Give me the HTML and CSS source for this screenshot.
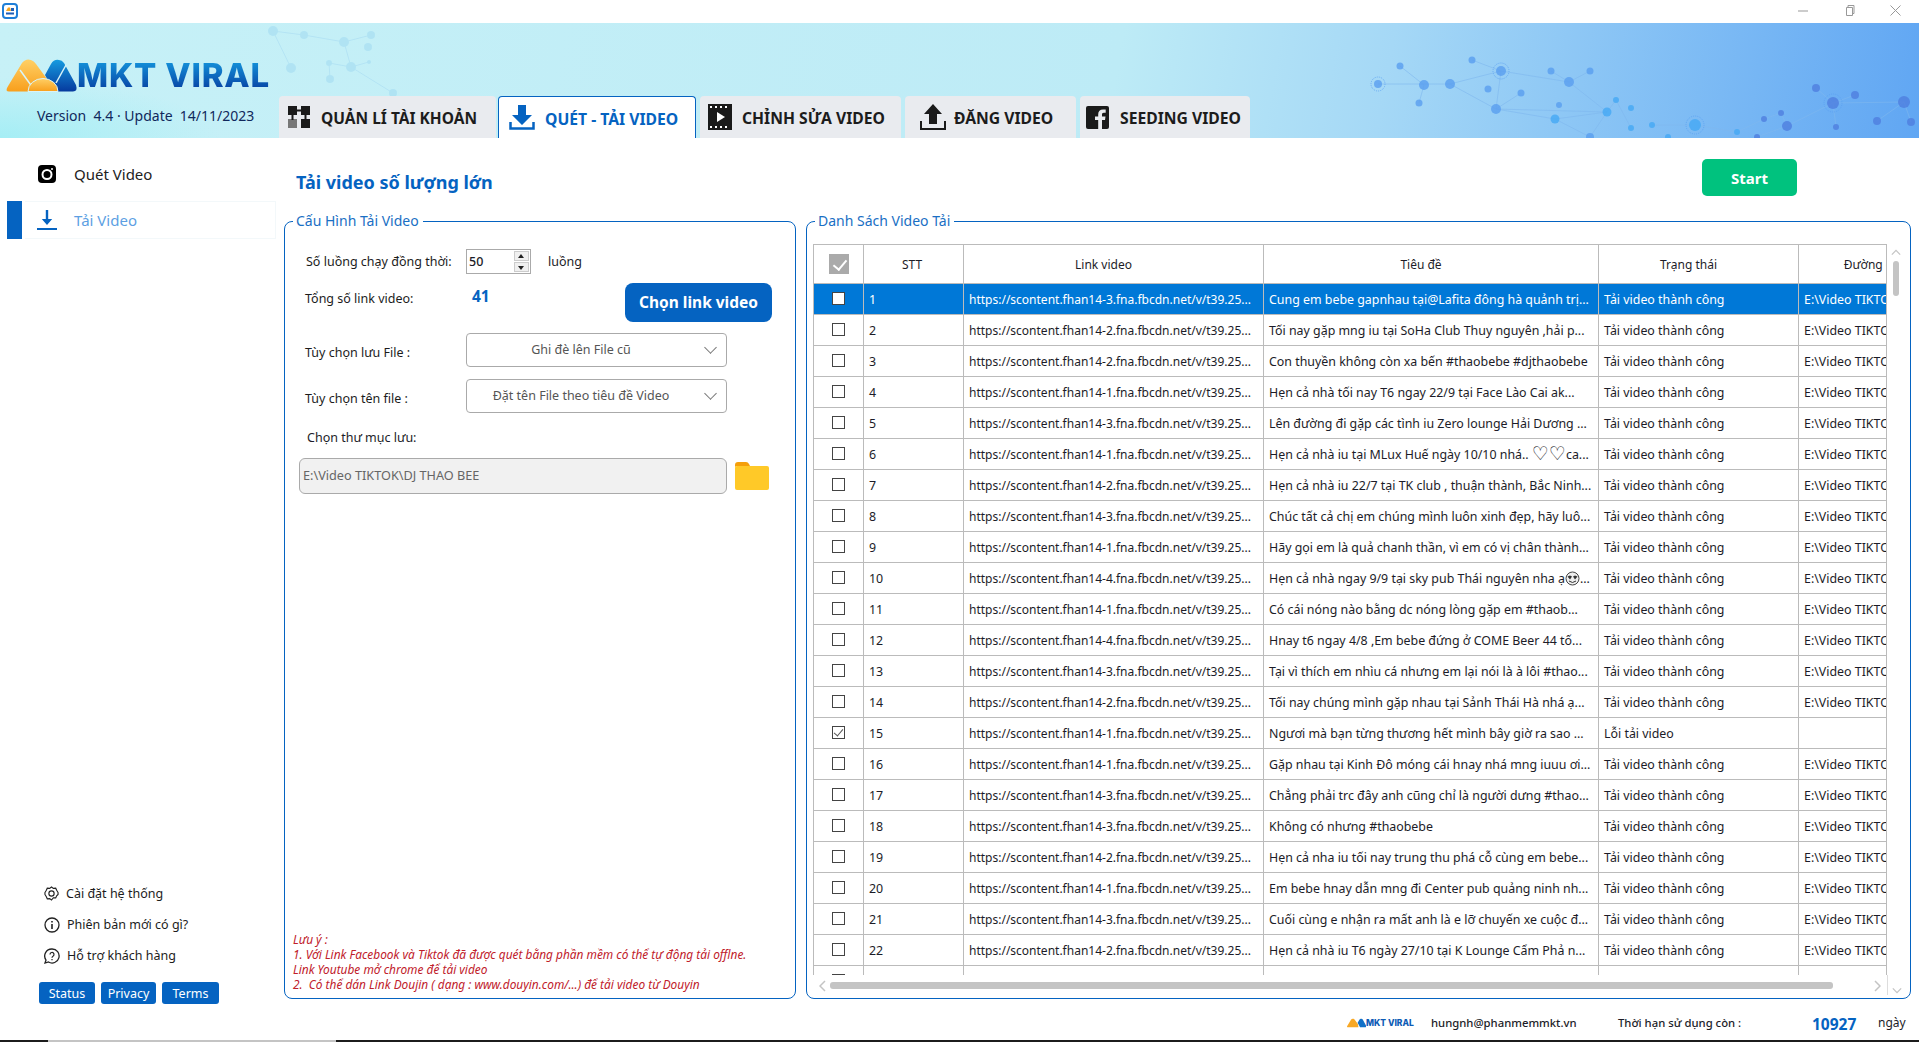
FILE: index.html
```html
<!DOCTYPE html>
<html lang="vi">
<head>
    <meta charset="UTF-8">
    <title>MKT Viral</title>
    <link rel="stylesheet" href="styles.css">
</head>
<body>
<div class="app">
    <div class="titlebar">
        <svg class="app-icon" width="16" height="16" viewBox="0 0 16 16">
            <rect x="1" y="1" width="14" height="14" rx="3" fill="#fff" stroke="#1f7fd8" stroke-width="2"/>
            <path d="M4 8l2-3.500h2l1 3.500z" fill="#f5a623"/>
            <rect x="9" y="5" width="3" height="3" fill="#1f5fb8"/>
            <rect x="4" y="9.500" width="8" height="2" fill="#1f5fb8"/>
        </svg>
        <div class="win-btns">
            <svg width="11" height="11" viewBox="0 0 11 11"><path d="M0 6h10" stroke="#999"/></svg>
            <svg width="11" height="11" viewBox="0 0 11 11"><path d="M2.500 2.500h6v8h-6zM4 2.500V.5h6v8H8.500" fill="none" stroke="#999"/></svg>
            <svg width="11" height="11" viewBox="0 0 11 11"><path d="M.5.5l10 10M10.500.5l-10 10" stroke="#999"/></svg>
        </div>
    </div>

    <header class="banner">
        <svg class="network" viewBox="0 23 1919 115" width="1919" height="115">
            <g class="net-left">
                <g stroke="#a9dcf2" stroke-width="1" fill="none">
                    <path d="M273 31L304 35L344 42M344 42L351 67M371 35L344 42M273 31L291 68M329 63L351 67L369 62M329 63L330 79M351 67L393 93"/>
                </g>
                <g fill="#a4dcf2">
                    <circle cx="273" cy="31" r="5"/><circle cx="304" cy="35" r="4"/><circle cx="344" cy="42" r="5"/>
                    <circle cx="371" cy="35" r="4"/><circle cx="368" cy="47" r="4"/><circle cx="291" cy="68" r="5"/>
                    <circle cx="329" cy="63" r="3"/><circle cx="351" cy="67" r="5"/><circle cx="369" cy="62" r="2"/>
                    <circle cx="330" cy="79" r="4"/><circle cx="393" cy="93" r="4"/>
                </g>
            </g>
            <g stroke="#7fb8ef" stroke-width="1" fill="none" class="net-lines">
                <path d="M1378 84H1424L1450 84L1501 71L1569 82L1607 112L1555 119L1496 109L1450 84M1400 66L1424 85L1419 103M1472 60L1501 71L1496 109L1521 93M1551 71L1569 82L1590 71M1496 109L1607 112M1607 112L1616 100L1631 128M1555 119L1590 137M1607 112L1590 137M1652 125H1695L1737 132L1764 119L1781 113L1787 126L1833 103L1904 102L1911 122M1833 103L1816 88M1833 103L1855 95M1787 126L1757 137M1833 103L1836 127M1904 102L1877 121"/>
            </g>
            <g class="net-dots">
                <g fill="#5a9ff0">
                    <circle cx="1378" cy="84" r="4"/><circle cx="1400" cy="66" r="3.500"/><circle cx="1424" cy="85" r="5"/>
                    <circle cx="1450" cy="84" r="5"/><circle cx="1419" cy="103" r="3.500"/><circle cx="1472" cy="60" r="3.500"/>
                    <circle cx="1501" cy="71" r="5"/><circle cx="1488" cy="89" r="3.500"/><circle cx="1521" cy="93" r="3.500"/>
                    <circle cx="1496" cy="109" r="5"/><circle cx="1551" cy="71" r="3.500"/><circle cx="1569" cy="82" r="5"/>
                    <circle cx="1590" cy="71" r="3.500"/><circle cx="1559" cy="105" r="3"/><circle cx="1590" cy="137" r="4"/>
                </g>
                <g fill="#45a9f5">
                    <circle cx="1555" cy="119" r="4.500"/><circle cx="1607" cy="112" r="4.500"/><circle cx="1616" cy="100" r="3"/>
                    <circle cx="1631" cy="108" r="3"/><circle cx="1631" cy="128" r="3"/><circle cx="1652" cy="125" r="3"/>
                    <circle cx="1695" cy="125" r="6"/><circle cx="1737" cy="132" r="3"/><circle cx="1668" cy="137" r="3"/>
                </g>
                <g fill="#4f7fe0">
                    <circle cx="1764" cy="119" r="3"/><circle cx="1781" cy="113" r="3"/><circle cx="1787" cy="126" r="5"/>
                    <circle cx="1816" cy="88" r="4"/><circle cx="1833" cy="103" r="6"/><circle cx="1855" cy="95" r="4"/>
                    <circle cx="1904" cy="102" r="6"/><circle cx="1877" cy="121" r="4"/><circle cx="1911" cy="122" r="4"/>
                    <circle cx="1836" cy="127" r="3"/><circle cx="1757" cy="137" r="3"/>
                </g>
                <g fill="none" stroke="#5a9ff0" stroke-dasharray="1 1">
                    <circle cx="1378" cy="84" r="7"/><circle cx="1501" cy="71" r="8"/><circle cx="1695" cy="125" r="9"/><circle cx="1833" cy="103" r="9"/>
                </g>
            </g>
        </svg>
        <div class="brand">
            <div class="logo">
                <svg width="76" height="35" viewBox="0 0 74 35">
                    <defs>
                        <linearGradient id="lg-orange" x1="0" y1="0" x2="0" y2="1">
                            <stop offset="0" stop-color="#ffd066"/><stop offset="1" stop-color="#f89f1c"/>
                        </linearGradient>
                        <linearGradient id="lg-blue" x1="0" y1="0" x2="0" y2="1">
                            <stop offset="0" stop-color="#159be0"/><stop offset="1" stop-color="#063a9e"/>
                        </linearGradient>
                    </defs>
                    <path d="M6 33.500Q2 33.500 4.500 29L19 5Q23 0 28 2Q31 3 33 6L44 21L46 33.500z" fill="url(#lg-orange)"/>
                    <path d="M43 17L49 6Q52 1 57 2Q60 2 62 5L74 27Q76 33.500 71 33.500H52z" fill="url(#lg-blue)" transform="translate(-1 0)"/>
                    <path d="M17 12L30 30" stroke="#d9f4f8" stroke-width="1.500"/>
                    <path d="M63 7L53 25" stroke="#d9f4f8" stroke-width="1.500"/>
                    <path d="M25 33.500A15 13 0 0 1 55 33.500z" fill="url(#lg-orange)" stroke="#d9f4f8"/>
                </svg>
                <span class="logo-text">MKT VIRAL</span>
            </div>
            <div class="version">Version&nbsp; 4.4 · Update&nbsp; 14/11/2023</div>
        </div>
        <nav class="tabs">
            <div class="tab tab-accounts">
                <svg width="24" height="24" viewBox="0 0 24 24">
                    <rect x="1" y="1" width="9" height="9" fill="#1a1a1a"/>
                    <rect x="14" y="1" width="9" height="9" fill="#1a1a1a"/>
                    <rect x="1" y="14" width="9" height="9" fill="#777"/>
                    <rect x="14" y="14" width="9" height="9" fill="#1a1a1a"/>
                    <path d="M9 5.500h6M18.500 9v6M5.500 9v6" stroke="#1a1a1a" stroke-width="2"/>
                </svg>
                <span class="tab-label">QUẢN LÍ TÀI KHOẢN</span>
            </div>
            <div class="tab tab-active tab-scan">
                <svg width="26" height="25" viewBox="0 0 26 25">
                    <path d="M9 0h8v10h6L13 20 3 10h6z" fill="#0563c1"/>
                    <path d="M1.500 17v6.500h23V17" fill="none" stroke="#0563c1" stroke-width="2.500"/>
                </svg>
                <span class="tab-label">QUÉT - TẢI VIDEO</span>
            </div>
            <div class="tab tab-edit">
                <svg width="24" height="26" viewBox="0 0 24 26">
                    <rect width="24" height="26" fill="#1a1a1a"/>
                    <path d="M2 2h2v2H2zM7 2h2v2H7zM12 2h2v2h-2zM17 2h2v2h-2zM2 22h2v2H2zM7 22h2v2H7zM12 22h2v2h-2zM17 22h2v2h-2z" fill="#fff"/>
                    <path d="M9 8l8 5-8 5z" fill="#fff"/>
                </svg>
                <span class="tab-label">CHỈNH SỬA VIDEO</span>
            </div>
            <div class="tab tab-post">
                <svg width="26" height="26" viewBox="0 0 26 26">
                    <path d="M13 0l9 10h-5v10H9V10H4z" fill="#1a1a1a"/>
                    <path d="M1 17v8h24v-8" fill="none" stroke="#1a1a1a" stroke-width="2"/>
                </svg>
                <span class="tab-label">ĐĂNG VIDEO</span>
            </div>
            <div class="tab tab-seed">
                <svg width="23" height="23" viewBox="0 0 23 23">
                    <rect width="23" height="23" rx="2" fill="#1a1a1a"/>
                    <path d="M16 23v-9h3l.500-3.500H16V8.500c0-1 .500-1.700 1.800-1.700h1.900V3.600C19 3.500 18 3.400 17 3.400c-3 0-4.800 1.800-4.800 4.800v2.300H9V14h3.200v9z" fill="#e9ebef"/>
                </svg>
                <span class="tab-label">SEEDING VIDEO</span>
            </div>
        </nav>
    </header>

    <div class="main">
        <aside class="sidebar">
            <nav class="side-nav">
                <div class="side-item">
                    <svg width="18" height="18" viewBox="0 0 18 18">
                        <rect width="18" height="18" rx="4" fill="#000"/>
                        <circle cx="9" cy="9.500" r="4.500" fill="none" stroke="#fff" stroke-width="2"/>
                        <circle cx="14" cy="4" r="1" fill="#fff"/>
                    </svg>
                    Quét Video
                </div>
                <div class="side-item side-item-active">
                    <svg width="20" height="20" viewBox="0 0 20 20">
                        <path d="M8.800 0h2.400v9h4L10 15 4.800 9h4z" fill="#0563c1"/>
                        <path d="M0 19h20" stroke="#0563c1" stroke-width="2"/>
                    </svg>
                    Tải Video
                </div>
            </nav>
            <div class="side-bottom">
                <div class="side-link">
                    <svg width="15" height="15" viewBox="0 0 16 16" fill="none" stroke="#222" stroke-width="1.200">
                        <path d="M8 1l2 1.500 2.500-.2 1 2.200L15 7v2l-1.500 1.500-1 2.200-2.500-.2L8 15l-2-1.500-2.500.2-1-2.200L1 9V7l1.500-2.500 1-2.200 2.500.2z"/>
                        <circle cx="8" cy="8" r="2.800"/>
                    </svg>
                    Cài đặt hệ thống
                </div>
                <div class="side-link">
                    <svg width="16" height="16" viewBox="0 0 16 16">
                        <circle cx="8" cy="8" r="7" fill="none" stroke="#222" stroke-width="1.300"/>
                        <path d="M8 7v5M8 4v1.600" stroke="#222" stroke-width="1.600"/>
                    </svg>
                    Phiên bản mới có gì?
                </div>
                <div class="side-link">
                    <svg width="16" height="16" viewBox="0 0 16 16">
                        <path d="M8 1a7 7 0 1 1-3.500 13L1 15l1-3A7 7 0 0 1 8 1z" fill="none" stroke="#222" stroke-width="1.300"/>
                        <path d="M6 6.500a2 2 0 1 1 3 1.700c-.7.400-1 .8-1 1.500M8 11v1.300" fill="none" stroke="#222" stroke-width="1.200"/>
                    </svg>
                    Hỗ trợ khách hàng
                </div>
                <div class="side-btns">
                    <span class="pill pill-status">Status</span>
                    <span class="pill pill-privacy">Privacy</span>
                    <span class="pill pill-terms">Terms</span>
                </div>
            </div>
        </aside>

        <section class="workspace">
            <div class="work-head">
                <h1>Tải video số lượng lớn</h1>
                <button class="btn-start">Start</button>
            </div>
            <div class="panels">
                <fieldset class="panel panel-config">
                    <legend>Cấu Hình Tải Video</legend>
                    <div class="row row-threads">
                        <label class="lbl">Số luồng chạy đồng thời:</label>
                        <div class="spin">
                            <span class="spin-val">50</span>
                            <span class="spin-btns"><i class="up"></i><i class="down"></i></span>
                        </div>
                        <span class="unit">luồng</span>
                    </div>
                    <div class="row row-total">
                        <label class="lbl">Tổng số link video:</label>
                        <span class="total-num">41</span>
                        <button class="btn-link">Chọn link video</button>
                    </div>
                    <div class="row row-select row-select-1">
                        <label class="lbl">Tùy chọn lưu File :</label>
                        <div class="select">Ghi đè lên File cũ</div>
                    </div>
                    <div class="row row-select row-select-2">
                        <label class="lbl">Tùy chọn tên file :</label>
                        <div class="select">Đặt tên File theo tiêu đề Video</div>
                    </div>
                    <div class="folder-label">Chọn thư mục lưu:</div>
                    <div class="folder-row">
                        <div class="path-input">E:\Video TIKTOK\DJ THAO BEE</div>
                        <svg width="34" height="28" viewBox="0 0 34 28">
                            <path d="M0 3q0-3 3-3h8q2 0 3 2l1 2H2q-2 0-2 2z" fill="#f59f0a"/>
                            <path d="M0 6q0-2 2-2h30q2 0 2 2v20q0 2-2 2H2q-2 0-2-2z" fill="#ffc928"/>
                        </svg>
                    </div>
                    <div class="notes">
                        Lưu ý :<br>
                        1. Với Link Facebook và Tiktok đã được quét bằng phần mềm có thể tự động tải offlne.<br>
                        Link Youtube mở chrome để tải video<br>
                        2.&nbsp; Có thể dán Link Doujin ( dạng : www.douyin.com/...) để tải video từ Douyin
                    </div>
                </fieldset>

                <fieldset class="panel panel-list">
                    <legend>Danh Sách Video Tải</legend>
                    <div class="table-view">
                        <table class="grid">
                            <colgroup>
                                <col class="c-check"><col class="c-stt"><col class="c-link"><col class="c-title"><col class="c-state"><col class="c-path">
                            </colgroup>
                            <thead>
                                <tr><th><span class="cb-all"></span></th><th class="th-stt">STT</th><th class="th-off">Link video</th><th class="th-off">Tiêu đề</th><th class="th-off">Trạng thái</th><th>Đường dẫn</th></tr>
                            </thead>
                            <tbody>
                                <tr class="selected"><td><span class="cb"></span></td><td>1</td><td>https://scontent.fhan14-3.fna.fbcdn.net/v/t39.25...</td><td>Cung em bebe gapnhau tại@Lafita đông hà quảnh trị...</td><td>Tải video thành công</td><td>E:\Video TIKTOK\DJ THAO BEE</td></tr>
                                <tr><td><span class="cb"></span></td><td>2</td><td>https://scontent.fhan14-2.fna.fbcdn.net/v/t39.25...</td><td>Tối nay gặp mng iu tại SoHa Club Thuy nguyên ,hải p...</td><td>Tải video thành công</td><td>E:\Video TIKTOK\DJ THAO BEE</td></tr>
                                <tr><td><span class="cb"></span></td><td>3</td><td>https://scontent.fhan14-2.fna.fbcdn.net/v/t39.25...</td><td>Con thuyền không còn xa bến #thaobebe #djthaobebe</td><td>Tải video thành công</td><td>E:\Video TIKTOK\DJ THAO BEE</td></tr>
                                <tr><td><span class="cb"></span></td><td>4</td><td>https://scontent.fhan14-1.fna.fbcdn.net/v/t39.25...</td><td>Hẹn cả nhà tối nay T6 ngay 22/9 tại Face Lào Cai ak...</td><td>Tải video thành công</td><td>E:\Video TIKTOK\DJ THAO BEE</td></tr>
                                <tr><td><span class="cb"></span></td><td>5</td><td>https://scontent.fhan14-3.fna.fbcdn.net/v/t39.25...</td><td>Lên đường đi gặp các tình iu Zero lounge Hải Dương ...</td><td>Tải video thành công</td><td>E:\Video TIKTOK\DJ THAO BEE</td></tr>
                                <tr><td><span class="cb"></span></td><td>6</td><td>https://scontent.fhan14-1.fna.fbcdn.net/v/t39.25...</td><td>Hẹn cả nhà iu tại MLux Huế ngày 10/10 nhá.. <span class="sym">♡♡</span>ca...</td><td>Tải video thành công</td><td>E:\Video TIKTOK\DJ THAO BEE</td></tr>
                                <tr><td><span class="cb"></span></td><td>7</td><td>https://scontent.fhan14-2.fna.fbcdn.net/v/t39.25...</td><td>Hẹn cả nhà iu 22/7 tại TK club , thuận thành, Bắc Ninh...</td><td>Tải video thành công</td><td>E:\Video TIKTOK\DJ THAO BEE</td></tr>
                                <tr><td><span class="cb"></span></td><td>8</td><td>https://scontent.fhan14-3.fna.fbcdn.net/v/t39.25...</td><td>Chúc tất cả chị em chúng mình luôn xinh đẹp, hãy luô...</td><td>Tải video thành công</td><td>E:\Video TIKTOK\DJ THAO BEE</td></tr>
                                <tr><td><span class="cb"></span></td><td>9</td><td>https://scontent.fhan14-1.fna.fbcdn.net/v/t39.25...</td><td>Hãy gọi em là quả chanh thần, vì em có vị chân thành...</td><td>Tải video thành công</td><td>E:\Video TIKTOK\DJ THAO BEE</td></tr>
                                <tr><td><span class="cb"></span></td><td>10</td><td>https://scontent.fhan14-4.fna.fbcdn.net/v/t39.25...</td><td>Hẹn cả nhà ngay 9/9 tại sky pub Thái nguyên nha ạ<svg class="emoji" width="15" height="15" viewBox="0 0 15 15"><circle cx="7.500" cy="7.500" r="6.500" fill="#eee" stroke="#444"/><path d="M2.500 5.500l2.500 3 2-3-2-1zM12.500 5.500l-2.500 3-2-3 2-1z" fill="#333"/><path d="M4 10q3.500 3 7 0" fill="none" stroke="#333"/></svg>...</td><td>Tải video thành công</td><td>E:\Video TIKTOK\DJ THAO BEE</td></tr>
                                <tr><td><span class="cb"></span></td><td>11</td><td>https://scontent.fhan14-1.fna.fbcdn.net/v/t39.25...</td><td>Có cái nóng nào bằng dc nóng lòng gặp em #thaob...</td><td>Tải video thành công</td><td>E:\Video TIKTOK\DJ THAO BEE</td></tr>
                                <tr><td><span class="cb"></span></td><td>12</td><td>https://scontent.fhan14-4.fna.fbcdn.net/v/t39.25...</td><td>Hnay t6 ngay 4/8 ,Em bebe đứng ở COME Beer 44 tố...</td><td>Tải video thành công</td><td>E:\Video TIKTOK\DJ THAO BEE</td></tr>
                                <tr><td><span class="cb"></span></td><td>13</td><td>https://scontent.fhan14-3.fna.fbcdn.net/v/t39.25...</td><td>Tại vì thích em nhìu cá nhưng em lại nói là à lôi #thao...</td><td>Tải video thành công</td><td>E:\Video TIKTOK\DJ THAO BEE</td></tr>
                                <tr><td><span class="cb"></span></td><td>14</td><td>https://scontent.fhan14-2.fna.fbcdn.net/v/t39.25...</td><td>Tối nay chúng mình gặp nhau tại Sảnh Thái Hà nhá ạ...</td><td>Tải video thành công</td><td>E:\Video TIKTOK\DJ THAO BEE</td></tr>
                                <tr><td><span class="cb cb-on"></span></td><td>15</td><td>https://scontent.fhan14-1.fna.fbcdn.net/v/t39.25...</td><td>Ngươi mà bạn từng thương hết mình bây giờ ra sao ...</td><td>Lỗi tải video</td><td></td></tr>
                                <tr><td><span class="cb"></span></td><td>16</td><td>https://scontent.fhan14-1.fna.fbcdn.net/v/t39.25...</td><td>Gặp nhau tại Kinh Đô móng cái hnay nhá mng iuuu ơi...</td><td>Tải video thành công</td><td>E:\Video TIKTOK\DJ THAO BEE</td></tr>
                                <tr><td><span class="cb"></span></td><td>17</td><td>https://scontent.fhan14-3.fna.fbcdn.net/v/t39.25...</td><td>Chẳng phải trc đây anh cũng chỉ là người dưng #thao...</td><td>Tải video thành công</td><td>E:\Video TIKTOK\DJ THAO BEE</td></tr>
                                <tr><td><span class="cb"></span></td><td>18</td><td>https://scontent.fhan14-3.fna.fbcdn.net/v/t39.25...</td><td>Không có nhưng #thaobebe</td><td>Tải video thành công</td><td>E:\Video TIKTOK\DJ THAO BEE</td></tr>
                                <tr><td><span class="cb"></span></td><td>19</td><td>https://scontent.fhan14-2.fna.fbcdn.net/v/t39.25...</td><td>Hẹn cả nha iu tối nay trung thu phá cỗ cùng em bebe...</td><td>Tải video thành công</td><td>E:\Video TIKTOK\DJ THAO BEE</td></tr>
                                <tr><td><span class="cb"></span></td><td>20</td><td>https://scontent.fhan14-1.fna.fbcdn.net/v/t39.25...</td><td>Em bebe hnay dẫn mng đi Center pub quảng ninh nh...</td><td>Tải video thành công</td><td>E:\Video TIKTOK\DJ THAO BEE</td></tr>
                                <tr><td><span class="cb"></span></td><td>21</td><td>https://scontent.fhan14-3.fna.fbcdn.net/v/t39.25...</td><td>Cuối cùng e nhận ra mất anh là e lỡ chuyến xe cuộc đ...</td><td>Tải video thành công</td><td>E:\Video TIKTOK\DJ THAO BEE</td></tr>
                                <tr><td><span class="cb"></span></td><td>22</td><td>https://scontent.fhan14-2.fna.fbcdn.net/v/t39.25...</td><td>Hẹn cả nhà iu T6 ngày 27/10 tại K Lounge Cẩm Phả n...</td><td>Tải video thành công</td><td>E:\Video TIKTOK\DJ THAO BEE</td></tr>
                                <tr><td><span class="cb"></span></td><td></td><td></td><td></td><td></td><td></td></tr>
                            </tbody>
                        </table>
                    </div>
                    <div class="vbar">
                        <svg width="10" height="7" viewBox="0 0 12 7"><path d="M1 6l5-5 5 5" fill="none" stroke="#c4c4c4" stroke-width="1.500"/></svg>
                        <div class="vthumb"></div>
                    </div>
                    <div class="hbar">
                        <svg width="7" height="12" viewBox="0 0 7 12"><path d="M6 1L1 6l5 5" fill="none" stroke="#c4c4c4" stroke-width="1.500"/></svg>
                        <div class="hthumb"></div>
                        <svg width="7" height="12" viewBox="0 0 7 12"><path d="M1 1l5 5-5 5" fill="none" stroke="#c4c4c4" stroke-width="1.500"/></svg>
                    </div>
                    <div class="corner">
                        <svg width="10" height="7" viewBox="0 0 12 7"><path d="M1 1l5 5 5-5" fill="none" stroke="#c4c4c4" stroke-width="1.500"/></svg>
                    </div>
                </fieldset>
            </div>
            <footer class="status-row">
                <div class="mini-logo">
                    <svg width="20" height="10" viewBox="0 0 74 35">
                        <path d="M6 33.500Q2 33.500 4.500 29L19 5Q23 0 28 2Q31 3 33 6L44 21L46 33.500z" fill="#f8a825"/>
                        <path d="M43 17L49 6Q52 1 57 2Q60 2 62 5L74 27Q76 33.500 71 33.500H52z" fill="#1170c8"/>
                    </svg>
                    <span>MKT VIRAL</span>
                </div>
                <span class="email">hungnh@phanmemmkt.vn</span>
                <span class="expire">Thời hạn sử dụng còn :</span>
                <span class="days">10927</span>
                <span class="days-unit">ngày</span>
            </footer>
        </section>
    </div>

    <div class="taskbar"><span class="task-gap"></span></div>
</div>
</body>
</html>
```

FILE: styles.css
```css
* {
    box-sizing: border-box;
}

html, body {
    margin: 0;
    padding: 0;
    background: #fff;
}

body {
    font-family: "Noto Sans", "Open Sans", sans-serif;
    font-size: 12px;
    color: #1c1c28;
    overflow: hidden;
}

.app {
    width: 1919px;
    height: 1042px;
    display: flex;
    flex-direction: column;
    overflow: hidden;
}

/* title bar */
.titlebar {
    height: 23px;
    flex: none;
    display: flex;
    align-items: center;
    justify-content: space-between;
    padding: 0 18px 2px 2px;
}

.win-btns {
    display: flex;
    gap: 35px;
}

/* banner */
.banner {
    height: 115px;
    flex: none;
    position: relative;
    display: flex;
    align-items: flex-end;
    background:
        radial-gradient(ellipse 220px 60px at 0 115px, #a5eef5, rgba(165, 238, 245, 0)),
        linear-gradient(100deg, #c7f1f7 0%, #bdebf6 58%, #a5d8f6 72%, #60a6f3 100%);
}

.network {
    position: absolute;
    top: 0;
    left: 0;
}

.net-left { opacity: 0.6; }
.net-lines { opacity: 0.6; }
.net-dots { opacity: 0.8; }

.brand {
    width: 279px;
    height: 115px;
    flex: none;
    position: relative;
}

.logo {
    display: flex;
    align-items: center;
    padding: 35px 0 0 2px;
    height: 70px;
}

.logo-text {
    font-family: "Inter", sans-serif;
    font-weight: 800;
    font-size: 33px;
    line-height: 35px;
    letter-spacing: 0.8px;
    background: linear-gradient(180deg, #159be0 0%, #063a9e 100%);
    -webkit-background-clip: text;
    background-clip: text;
    color: transparent;
    margin-left: -1px;
}

.version {
    font-size: 14px;
    color: #10285c;
    margin: 13px 0 0 37px;
    white-space: nowrap;
}

.tabs {
    display: flex;
    position: relative;
    height: 42px;
}

.tab {
    height: 42px;
    display: flex;
    align-items: center;
    gap: 10px;
    background: #e9ebef;
    border-radius: 4px 4px 0 0;
    font-size: 15.700px;
    font-weight: 700;
    color: #1c1c1c;
    white-space: nowrap;
}

.tab-label {
    padding-top: 2px;
}

.tab-accounts { width: 217px; padding-left: 8px; margin-right: 2px; font-size: 15.500px; }
.tab-scan { width: 198px; padding-left: 10px; margin-right: 4px; }
.tab-edit { width: 201px; padding-left: 8px; margin-right: 4px; }
.tab-post { width: 171px; padding-left: 15px; margin-right: 4px; gap: 8px; }
.tab-seed { width: 170px; padding-left: 6px; gap: 11px; }

.tab-active {
    background: #fff;
    color: #0563c1;
    border: 1px solid #0563c1;
    border-bottom: 0;
}

/* main area */
.main {
    flex: 1;
    display: flex;
    min-height: 0;
}

.sidebar {
    width: 284px;
    flex: none;
    display: flex;
    flex-direction: column;
    padding: 17px 0 36px;
}

.side-item {
    height: 38px;
    display: flex;
    align-items: center;
    gap: 18px;
    padding-left: 38px;
    margin-bottom: 8px;
    font-size: 15px;
    color: #222;
}

.side-item-active {
    margin-left: 7px;
    margin-right: 8px;
    gap: 17px;
    color: #5d9fe3;
    border-left: 15px solid #0563c1;
    box-shadow: inset 3px 0 0 #fff, inset 0 0 0 1px #f3f8fa;
    padding-left: 15px;
}

.side-bottom {
    margin-top: auto;
}

.side-link {
    height: 31px;
    display: flex;
    align-items: center;
    gap: 7px;
    padding-left: 44px;
    font-size: 12.500px;
    color: #1c1c1c;
}

.side-btns {
    display: flex;
    gap: 6px;
    margin: 11px 0 0 39px;
}

.pill {
    height: 22px;
    display: flex;
    align-items: center;
    justify-content: center;
    background: #0563c1;
    color: #fff;
    border-radius: 3px;
    font-size: 12.500px;
}

.pill-status { width: 56px; }
.pill-privacy { width: 55px; }
.pill-terms { width: 57px; }

.workspace {
    flex: 1;
    min-width: 0;
    display: flex;
    flex-direction: column;
    padding-right: 8px;
}

.work-head {
    height: 73px;
    flex: none;
    display: flex;
    align-items: flex-start;
    justify-content: space-between;
    padding: 21px 114px 0 12px;
}

.work-head h1 {
    margin: 11px 0 0;
    font-size: 18px;
    line-height: 24px;
    font-weight: 700;
    color: #0563c1;
}

.btn-start {
    width: 95px;
    height: 37px;
    border: 0;
    border-radius: 5px;
    background: #00c27e;
    color: #fff;
    font: 700 15px "Noto Sans", sans-serif;
}

.panels {
    height: 788px;
    flex: none;
    display: flex;
    gap: 10px;
}

.panel {
    margin: 0;
    min-width: 0;
    border: 1px solid #0563c1;
    border-radius: 8px;
}

.panel legend {
    margin-left: 2px;
    padding: 0 4px 2px 3px;
    font-size: 14px;
    line-height: 19px;
    color: #1a6fc4;
}

/* config panel */
.panel-config {
    width: 512px;
    padding: 17px 20px 6px;
    display: flex;
    flex-direction: column;
}

.panel-config legend {
    margin-left: -12px;
}

.row {
    display: flex;
    align-items: center;
}

.lbl {
    width: 161px;
    flex: none;
    font-size: 12.500px;
    color: #1c1c1c;
    white-space: nowrap;
}

.row-threads {
    height: 25px;
    padding-left: 1px;
}

.row-threads .lbl {
    width: 160px;
}

.spin {
    width: 65px;
    height: 25px;
    border: 1px solid #aaa;
    display: flex;
    align-items: center;
    justify-content: space-between;
    padding: 0 1px 0 2px;
    background: #fff;
}

.spin-val {
    font-weight: 500;
    font-size: 12.500px;
}

.spin-btns {
    display: flex;
    flex-direction: column;
    gap: 1px;
}

.spin-btns i {
    width: 15px;
    height: 10px;
    background: #f0f0f0;
    border: 1px solid #ccc;
    display: block;
    position: relative;
}

.spin-btns i::after {
    content: "";
    position: absolute;
    left: 3px;
    border-left: 3px solid transparent;
    border-right: 3px solid transparent;
}

.spin-btns .up::after {
    top: 2px;
    border-bottom: 4px solid #222;
}

.spin-btns .down::after {
    top: 3px;
    border-top: 4px solid #222;
}

.unit {
    margin-left: 17px;
    font-size: 12.500px;
}

.row-total {
    height: 39px;
    margin-top: 9px;
    align-items: flex-start;
}

.row-total .lbl {
    margin-top: 7px;
}

.total-num {
    margin: 2px 0 0 6px;
    font-size: 15.500px;
    font-weight: 700;
    color: #0563c1;
}

.btn-link {
    width: 147px;
    height: 39px;
    margin-left: auto;
    margin-right: 3px;
    border: 0;
    border-radius: 8px;
    padding: 0 0 2px;
    background: #0563c1;
    color: #fff;
    font: 700 15.500px "Noto Sans", sans-serif;
}

.row-select {
    height: 34px;
}

.row-select-1 { margin-top: 11px; }
.row-select-2 { margin-top: 12px; }

.row-select .lbl {
    padding-top: 5px;
}

.select {
    width: 261px;
    height: 34px;
    border: 1px solid #aaa;
    border-radius: 4px;
    display: flex;
    align-items: center;
    justify-content: center;
    padding: 0 31px 2px 0;
    position: relative;
    font-size: 12.500px;
    color: #555;
}

.select::after {
    content: "";
    position: absolute;
    right: 11px;
    top: 9px;
    width: 8px;
    height: 8px;
    border-right: 1px solid #777;
    border-bottom: 1px solid #777;
    transform: rotate(45deg);
}

.folder-label {
    height: 20px;
    margin: 15px 0 0 2px;
    line-height: 20px;
    font-size: 12.500px;
}

.folder-row {
    display: flex;
    align-items: center;
    gap: 8px;
    height: 36px;
    margin: 10px 0 0 -6px;
}

.path-input {
    width: 428px;
    height: 36px;
    background: #f1f1f1;
    border: 1px solid #aaa;
    border-radius: 6px;
    padding: 0 3px 2px;
    display: flex;
    align-items: center;
    font-size: 12.700px;
    color: #666;
}

.notes {
    margin: auto 0 0 -12px;
    font-size: 11.900px;
    line-height: 15px;
    font-style: italic;
    color: #c0202a;
    white-space: nowrap;
}

/* list panel */
.panel-list {
    width: 1105px;
    padding: 12px 0 0 6px;
    display: grid;
    grid-template-columns: 1074px 1fr;
    grid-template-rows: 731px 1fr;
}

.table-view {
    overflow: hidden;
    border-right: 1px solid #bbb;
}

.grid {
    width: 1140px;
    table-layout: fixed;
    border-collapse: collapse;
    font-size: 12.400px;
}

.c-check { width: 50px; }
.c-stt { width: 100px; }
.c-link { width: 300px; }
.c-title { width: 335px; }
.c-state { width: 200px; }
.c-path { width: 154px; }

.grid th, .grid td {
    border: 1px solid #bbb;
    white-space: nowrap;
    overflow: hidden;
    padding: 0 0 0 5px;
}

.grid th {
    height: 39px;
    font-size: 12px;
    font-weight: 400;
    text-align: center;
    padding: 1px 0 0;
}

.grid .th-off {
    padding-right: 20px;
}

.grid .th-stt {
    padding-right: 3px;
}

.grid td {
    height: 31px;
    padding-top: 1px;
}

.grid td:nth-child(3) {
    font-size: 12px;
}

.grid td:first-child, .grid th:first-child {
    text-align: center;
    padding: 0;
    vertical-align: top;
}

.selected td {
    background: #0078d7;
    color: #fff;
}

.cb {
    display: block;
    width: 13px;
    height: 13px;
    margin: 8px auto 0;
    background: #fff;
    border: 1px solid #444;
    position: relative;
}

.cb-on::after {
    content: "";
    position: absolute;
    left: 3px;
    top: 0;
    width: 4px;
    height: 8px;
    border-right: 1px solid #555;
    border-bottom: 1px solid #555;
    transform: rotate(40deg);
}

.cb-all {
    display: block;
    width: 20px;
    height: 20px;
    margin: 9px auto 0;
    background: #aaa;
    position: relative;
}

.cb-all::after {
    content: "";
    position: absolute;
    left: 7px;
    top: 3px;
    width: 6px;
    height: 11px;
    border-right: 2px solid #fff;
    border-bottom: 2px solid #fff;
    transform: rotate(40deg);
}

.sym {
    font-family: "DejaVu Sans", sans-serif;
    font-size: 19px;
    line-height: 0;
    vertical-align: -1px;
}

.emoji {
    vertical-align: -3px;
}

.vbar {
    display: flex;
    flex-direction: column;
    padding: 5px 0 0 4px;
}

.vthumb {
    width: 6px;
    height: 35px;
    margin: 5px 0 0 2px;
    background: #c4c4c4;
    border-radius: 3px;
}

.hbar {
    display: flex;
    align-items: center;
    height: 20px;
    padding-top: 1px;
    padding-left: 6px;
}

.hthumb {
    width: 1003px;
    height: 7px;
    margin: 0 41px 0 4px;
    background: #c4c4c4;
    border-radius: 3px;
}

.corner {
    height: 20px;
    padding: 6px 0 0 4px;
    border-left: 1px solid #ddd;
}

/* status row */
.status-row {
    flex: 1;
    display: flex;
    align-items: center;
    padding-top: 6px;
    white-space: nowrap;
}

.mini-logo {
    margin-left: 1062px;
    width: 85px;
    display: flex;
    align-items: center;
    gap: 0;
    font: 800 8.500px "Inter", sans-serif;
    color: #0d5bb5;
}

.email {
    width: 187px;
    font-size: 11.300px;
    font-weight: 500;
}

.expire {
    width: 195px;
    font-size: 11.300px;
    font-weight: 500;
}

.days {
    width: 66px;
    margin-left: -1px;
    padding-top: 2px;
    font-size: 15.500px;
    font-weight: 700;
    color: #0563c1;
}

.days-unit {
    font-size: 12px;
}

.taskbar {
    height: 2px;
    flex: none;
    background: #1c1c1c;
}

.task-gap {
    display: block;
    width: 288px;
    height: 2px;
    margin-left: 48px;
    background: #c4c4c4;
}
```
